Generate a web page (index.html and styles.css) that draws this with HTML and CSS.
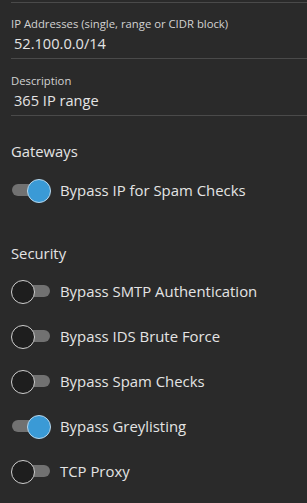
FILE: index.html
```html
<!DOCTYPE html>
<html lang="en">
  <head>
    <meta charset="UTF-8" />
    <meta name="viewport" content="width=device-width, initial-scale=1.0" />
    <title>IP Range</title>
    <link rel="stylesheet" href="styles.css">
  </head>
  <body>
    <div class="fields">
      <div class="field">
        <div class="label">IP Addresses (single, range or CIDR block)</div>
        <div class="value">52.100.0.0/14</div>
      </div>
      <div class="field">
        <div class="label">Description</div>
        <div class="value">365 IP range</div>
      </div>
    </div>

    <div class="section gateways">
      <h2>Gateways</h2>
      <div class="row">
        <span class="toggle on"></span>
        <span class="text">Bypass IP for Spam Checks</span>
      </div>
    </div>

    <div class="section security">
      <h2>Security</h2>
      <div class="row">
        <span class="toggle"></span>
        <span class="text">Bypass SMTP Authentication</span>
      </div>
      <div class="row">
        <span class="toggle"></span>
        <span class="text">Bypass IDS Brute Force</span>
      </div>
      <div class="row">
        <span class="toggle"></span>
        <span class="text">Bypass Spam Checks</span>
      </div>
      <div class="row">
        <span class="toggle on"></span>
        <span class="text">Bypass Greylisting</span>
      </div>
      <div class="row">
        <span class="toggle"></span>
        <span class="text">TCP Proxy</span>
      </div>
    </div>
  </body>
</html>
```

FILE: styles.css
```css
* {
  margin: 0;
  padding: 0;
  box-sizing: border-box;
}
body {
  background: #2a2a2a;
  color: #e4e4e4;
  font-family: "Open Sans", "Noto Sans", sans-serif;
  padding: 2px 0 0 11px;
}
.fields .field {
  border-top: 1px solid #4a4a4a;
  padding-top: 14px;
  padding-bottom: 5px;
}
.fields .field:last-child {
  border-bottom: 1px solid #4a4a4a;
  padding-top: 15px;
}
.field .label {
  font-size: 11.3px;
  line-height: 14px;
  color: #d2d2d2;
}
.field .value {
  font-size: 14.6px;
  line-height: 20px;
  margin-top: 2px;
  padding-left: 3px;
}
h2 {
  font-size: 14.8px;
  font-weight: 400;
  line-height: 20px;
}
.gateways {
  margin-top: 25px;
}
.security {
  margin-top: 31px;
}
.row {
  display: flex;
  align-items: center;
  height: 45px;
}
.gateways .row {
  margin-top: 6px;
}
.security .row:first-of-type {
  margin-top: 5px;
}
.toggle {
  position: relative;
  width: 40px;
  height: 22px;
  margin-right: 9px;
  flex-shrink: 0;
}
.toggle::before {
  content: "";
  position: absolute;
  left: 1px;
  right: 1px;
  top: 5px;
  height: 12px;
  border-radius: 6px;
  background: #717171;
}
.toggle::after {
  content: "";
  position: absolute;
  left: 0;
  top: 0;
  width: 22px;
  height: 22px;
  border-radius: 50%;
  background: #1e1e1e;
  border: 1.5px solid #cfcfcf;
}
.toggle.on::after {
  left: auto;
  right: 0;
  background: #3a9ad6;
  border: 1px solid #b9d6ea;
}
.row .text {
  font-size: 14.9px;
}
```
